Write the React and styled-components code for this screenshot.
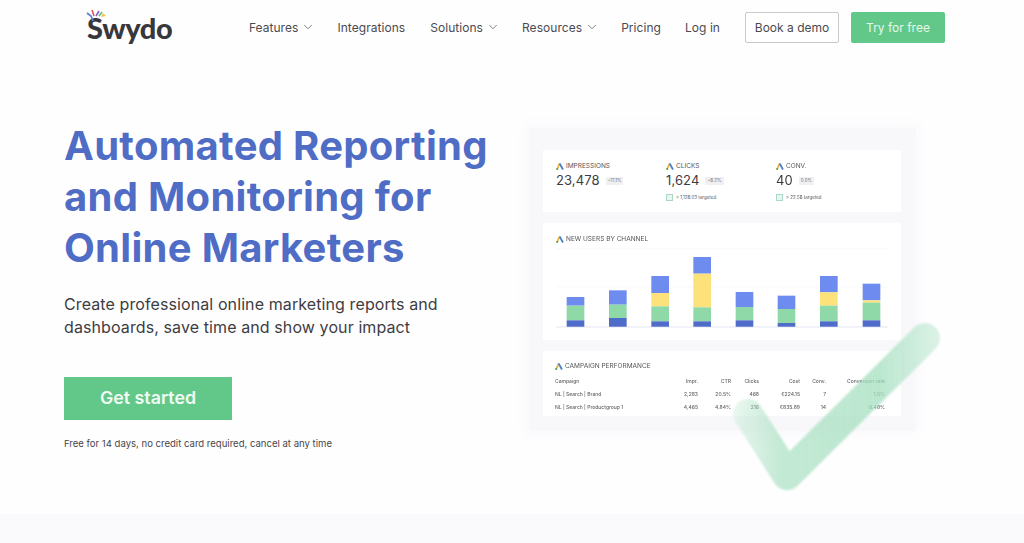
import React from 'react';
import styled, { createGlobalStyle } from 'styled-components';
import { ChevronDown } from 'lucide-react';

const GlobalStyle = createGlobalStyle`
  html, body {
    margin: 0;
    background: #fffeff;
    overflow: hidden;
  }
  *, *::before, *::after {
    box-sizing: border-box;
  }
  body {
    font-family: 'Inter', 'Liberation Sans', sans-serif;
    color: #3f3f46;
  }
`;

const Page = styled.div`
  position: relative;
  height: 543px;
  display: flex;
  flex-direction: column;
`;

const Header = styled.header`
  height: 55px;
  padding: 12px 79px 0 87px;
  display: flex;
  justify-content: space-between;
  align-items: flex-start;
`;

const LogoLink = styled.a`
  position: relative;
  display: block;
  width: 86px;
  font-family: 'Lato', sans-serif;
  font-weight: 900;
  font-size: 29px;
  line-height: 32px;
  letter-spacing: -0.4px;
  color: #38383c;
`;

const LogoBurst = styled.svg`
  position: absolute;
  left: -1px;
  top: -4px;
`;

const Nav = styled.nav`
  display: flex;
  align-items: center;
  height: 31px;
`;

const NavLink = styled.a`
  display: flex;
  align-items: center;
  gap: 3px;
  margin-right: ${props => props.$gap}px;
  padding-bottom: 1px;
  font-size: 12px;
  letter-spacing: 0.05px;
  color: #4a4a50;
  white-space: nowrap;
`;

const DemoButton = styled.a`
  width: 94px;
  height: 31px;
  margin-right: 12px;
  padding-bottom: 1px;
  display: flex;
  align-items: center;
  justify-content: center;
  font-size: 12px;
  color: #4a4a50;
  background: #fff;
  border: 1px solid #c9c9cc;
  border-radius: 2px;
`;

const TryButton = styled.a`
  width: 94px;
  height: 31px;
  padding-bottom: 1px;
  display: flex;
  align-items: center;
  justify-content: center;
  font-size: 12px;
  color: #e6f7ec;
  background: #62c889;
  border-radius: 2px;
`;

const Hero = styled.main`
  flex: 1;
  display: flex;
  padding: 65px 0 0 64px;
`;

const Intro = styled.section`
  width: 465px;
`;

const Title = styled.h1`
  margin: 0;
  font-size: 40px;
  line-height: 51px;
  font-weight: 700;
  letter-spacing: 0.3px;
  color: #506dc6;
  white-space: nowrap;
`;

const Lead = styled.p`
  margin: 20px 0 0;
  font-size: 16px;
  line-height: 23px;
  letter-spacing: 0.1px;
  color: #3d3d42;
`;

const StartButton = styled.a`
  width: 168px;
  height: 43px;
  margin-top: 38px;
  padding-bottom: 2px;
  display: flex;
  align-items: center;
  justify-content: center;
  font-size: 17.8px;
  font-weight: 600;
  color: #f1fbf4;
  background: #62c889;
`;

const Note = styled.p`
  margin: 17px 0 0;
  font-size: 9.55px;
  line-height: 14px;
  color: #46464b;
`;

const Mockup = styled.section`
  margin: 8px 0 0 0;
  width: 387px;
  height: 303px;
  padding: 22px 15px 0 14px;
  display: flex;
  flex-direction: column;
  gap: 11px;
  background: #f8f8fb;
  box-shadow: 0 0 14px 6px #fafafc;
  filter: blur(0.4px);
`;

const Card = styled.div`
  background: #fff;
  height: ${props => props.$height}px;
  padding: ${props => props.$padding};
`;

const KpiRow = styled.div`
  display: grid;
  grid-template-columns: 110px 110px 110px;
`;

const KpiLabel = styled.div`
  display: flex;
  align-items: center;
  gap: 2px;
  font-size: 6.5px;
  line-height: 9px;
  color: #55555a;
`;

const KpiValue = styled.div`
  display: flex;
  align-items: center;
  gap: 6px;
  margin-top: 1px;
  font-size: 13px;
  line-height: 17px;
  letter-spacing: 0.1px;
  color: #3d3d42;
`;

const Delta = styled.span`
  padding: 1px 2px;
  font-size: 4.5px;
  line-height: 6px;
  letter-spacing: 0;
  color: #77777c;
  background: #f0f0f2;
`;

const Target = styled.div`
  display: flex;
  align-items: center;
  gap: 3px;
  margin-top: 5px;
  font-size: 4.5px;
  line-height: 7px;
  color: #55555a;
`;

const TargetBox = styled.span`
  width: 7px;
  height: 7px;
  border: 1px solid #a9d8c6;
  background: #e8f5f0;
`;

const CardTitle = styled.div`
  display: flex;
  align-items: center;
  gap: 2px;
  font-size: 6.5px;
  line-height: 9px;
  color: #55555a;
`;

const Chart = styled.svg`
  display: block;
  margin-top: 3px;
`;

const Table = styled.table`
  width: 330px;
  margin-top: 3px;
  table-layout: fixed;
  border-collapse: collapse;
  font-size: 5px;
  color: #66666b;
  th, td {
    height: 13px;
    padding: 0;
    font-weight: 500;
    text-align: right;
  }
  th:first-child, td:first-child {
    width: 110px;
    text-align: left;
  }
  th:nth-child(2) { width: 33px; }
  th:nth-child(3) { width: 33px; }
  th:nth-child(4) { width: 28px; }
  th:nth-child(5) { width: 41px; }
  th:nth-child(6) { width: 26px; }
  th:nth-child(7) { width: 59px; }
`;

const Check = styled.svg`
  position: absolute;
  left: 725px;
  top: 315px;
  pointer-events: none;
  filter: blur(1px);
`;

const Strip = styled.div`
  height: 29px;
  background: #faf9fb;
`;

const navItems = [
  { label: 'Features', caret: true, gap: 22 },
  { label: 'Integrations', gap: 25 },
  { label: 'Solutions', caret: true, gap: 22 },
  { label: 'Resources', caret: true, gap: 22 },
  { label: 'Pricing', gap: 24 },
  { label: 'Log in', gap: 25 },
];

const kpis = [
  { label: 'IMPRESSIONS', value: '23,478', delta: '+11.1%' },
  { label: 'CLICKS', value: '1,624', delta: '+8.2%', target: '> 1,128.03 targeted' },
  { label: 'CONV.', value: '40', delta: '0.0%', target: '> 22.58 targeted' },
];

const stacks = [
  [110, 230, 256, null, 300],
  [237, 210, 253, null, 293],
  [364, 167, 218, 258, 303],
  [490, 110, 160, 261, 303],
  [617, 215, 260, null, 300],
  [743, 226, 266, null, 308],
  [870, 167, 216, 256, 303],
  [998, 190, 240, 247, 300],
];

const rows = [
  ['NL | Search | Brand', '2,283', '20.5%', '468', '€224.15', '7', '1.5%'],
  ['NL | Search | Productgroup 1', '4,465', '4.84%', '216', '€835.89', '14', '6.48%'],
];

function AdsMark() {
  return (
    <svg width="8" height="7" viewBox="0 0 8 7">
      <path d="M1 6.5 3.6.5" stroke="#e7b53c" strokeWidth="1.8" />
      <path d="M3.6.5 7 6.5" stroke="#4a7fd0" strokeWidth="1.8" />
      <circle cx="1.2" cy="5.9" r="1" fill="#4aa35f" />
    </svg>
  );
}

function BarChart() {
  const bottom = 320;
  return (
    <Chart width="332" height="82" viewBox="78 80 996 246">
      <path d="M78 85H1074M78 200H1074" stroke="#f6f6f9" strokeWidth="2" />
      {stacks.map(([x, top, blueEnd, yellowEnd, greenEnd]) => (
        <g key={x}>
          <rect x={x} y={top} width="53" height={blueEnd - top} fill="#6e8cf0" />
          {yellowEnd && <rect x={x} y={blueEnd} width="53" height={yellowEnd - blueEnd} fill="#fde27c" />}
          <rect x={x} y={yellowEnd || blueEnd} width="53" height={greenEnd - (yellowEnd || blueEnd)} fill="#8fd9a9" />
          <rect x={x} y={greenEnd} width="53" height={bottom - greenEnd} fill="#4f6cc9" />
        </g>
      ))}
      <path d="M78 320H1074" stroke="#d5daf0" strokeWidth="2" />
    </Chart>
  );
}

export default function App() {
  return (
    <Page>
      <GlobalStyle />
      <Header>
        <LogoLink>
          <LogoBurst width="24" height="14" viewBox="0 0 24 14">
            <path d="M1 5 5 8 7 13" stroke="#5f7fd6" strokeWidth="1.8" fill="none" />
            <path d="M6 2 8 8" stroke="#e0574f" strokeWidth="1.6" />
            <path d="M10 8 13 3" stroke="#8c5bc0" strokeWidth="1.6" />
            <path d="M13 8 16 4" stroke="#62c889" strokeWidth="1.8" />
            <path d="M15 9 20 8 17 5" fill="#f4c84b" />
          </LogoBurst>
          Swydo
        </LogoLink>
        <Nav>
          {navItems.map(item => (
            <NavLink key={item.label} $gap={item.gap}>
              {item.label}
              {item.caret && <ChevronDown size={14} strokeWidth={1.4} color="#66666b" />}
            </NavLink>
          ))}
          <DemoButton>Book a demo</DemoButton>
          <TryButton>Try for free</TryButton>
        </Nav>
      </Header>

      <Hero>
        <Intro>
          <Title>
            Automated Reporting
            <br />
            and Monitoring for
            <br />
            Online Marketers
          </Title>
          <Lead>
            Create professional online marketing reports and
            <br />
            dashboards, save time and show your impact
          </Lead>
          <StartButton>Get started</StartButton>
          <Note>Free for 14 days, no credit card required, cancel at any time</Note>
        </Intro>

        <Mockup>
          <Card $height={62} $padding="12px 13px">
            <KpiRow>
              {kpis.map(kpi => (
                <div key={kpi.label}>
                  <KpiLabel>
                    <AdsMark />
                    {kpi.label}
                  </KpiLabel>
                  <KpiValue>
                    {kpi.value}
                    <Delta>{kpi.delta}</Delta>
                  </KpiValue>
                  {kpi.target && (
                    <Target>
                      <TargetBox />
                      {kpi.target}
                    </Target>
                  )}
                </div>
              ))}
            </KpiRow>
          </Card>
          <Card $height={117} $padding="12px 13px">
            <CardTitle>
              <AdsMark />
              NEW USERS BY CHANNEL
            </CardTitle>
            <BarChart />
          </Card>
          <Card $height={65} $padding="11px 15px 0 12px">
            <CardTitle>
              <AdsMark />
              CAMPAIGN PERFORMANCE
            </CardTitle>
            <Table>
              <thead>
                <tr>
                  <th>Campaign</th>
                  <th>Impr.</th>
                  <th>CTR</th>
                  <th>Clicks</th>
                  <th>Cost</th>
                  <th>Conv.</th>
                  <th>Conversion rate</th>
                </tr>
              </thead>
              <tbody>
                {rows.map(row => (
                  <tr key={row[0]}>
                    {row.map((cell, index) => (
                      <td key={index}>{cell}</td>
                    ))}
                  </tr>
                ))}
              </tbody>
            </Table>
          </Card>
        </Mockup>
      </Hero>
      <Strip />

      <Check width="225" height="185" viewBox="725 315 225 185">
        <defs>
          <linearGradient id="checkFade" gradientUnits="userSpaceOnUse" x1="735" y1="0" x2="942" y2="0">
            <stop offset="0" stopColor="#a9e0c2" stopOpacity="0.25" />
            <stop offset="0.22" stopColor="#a9e0c2" stopOpacity="0.7" />
            <stop offset="0.7" stopColor="#a5dfbf" stopOpacity="0.75" />
            <stop offset="1" stopColor="#bfe8d2" stopOpacity="0.55" />
          </linearGradient>
        </defs>
        <path
          d="M748 414 787 475 925 338"
          fill="none"
          stroke="url(#checkFade)"
          strokeWidth="30"
          strokeLinejoin="round"
          strokeLinecap="round"
        />
      </Check>
    </Page>
  );
}
